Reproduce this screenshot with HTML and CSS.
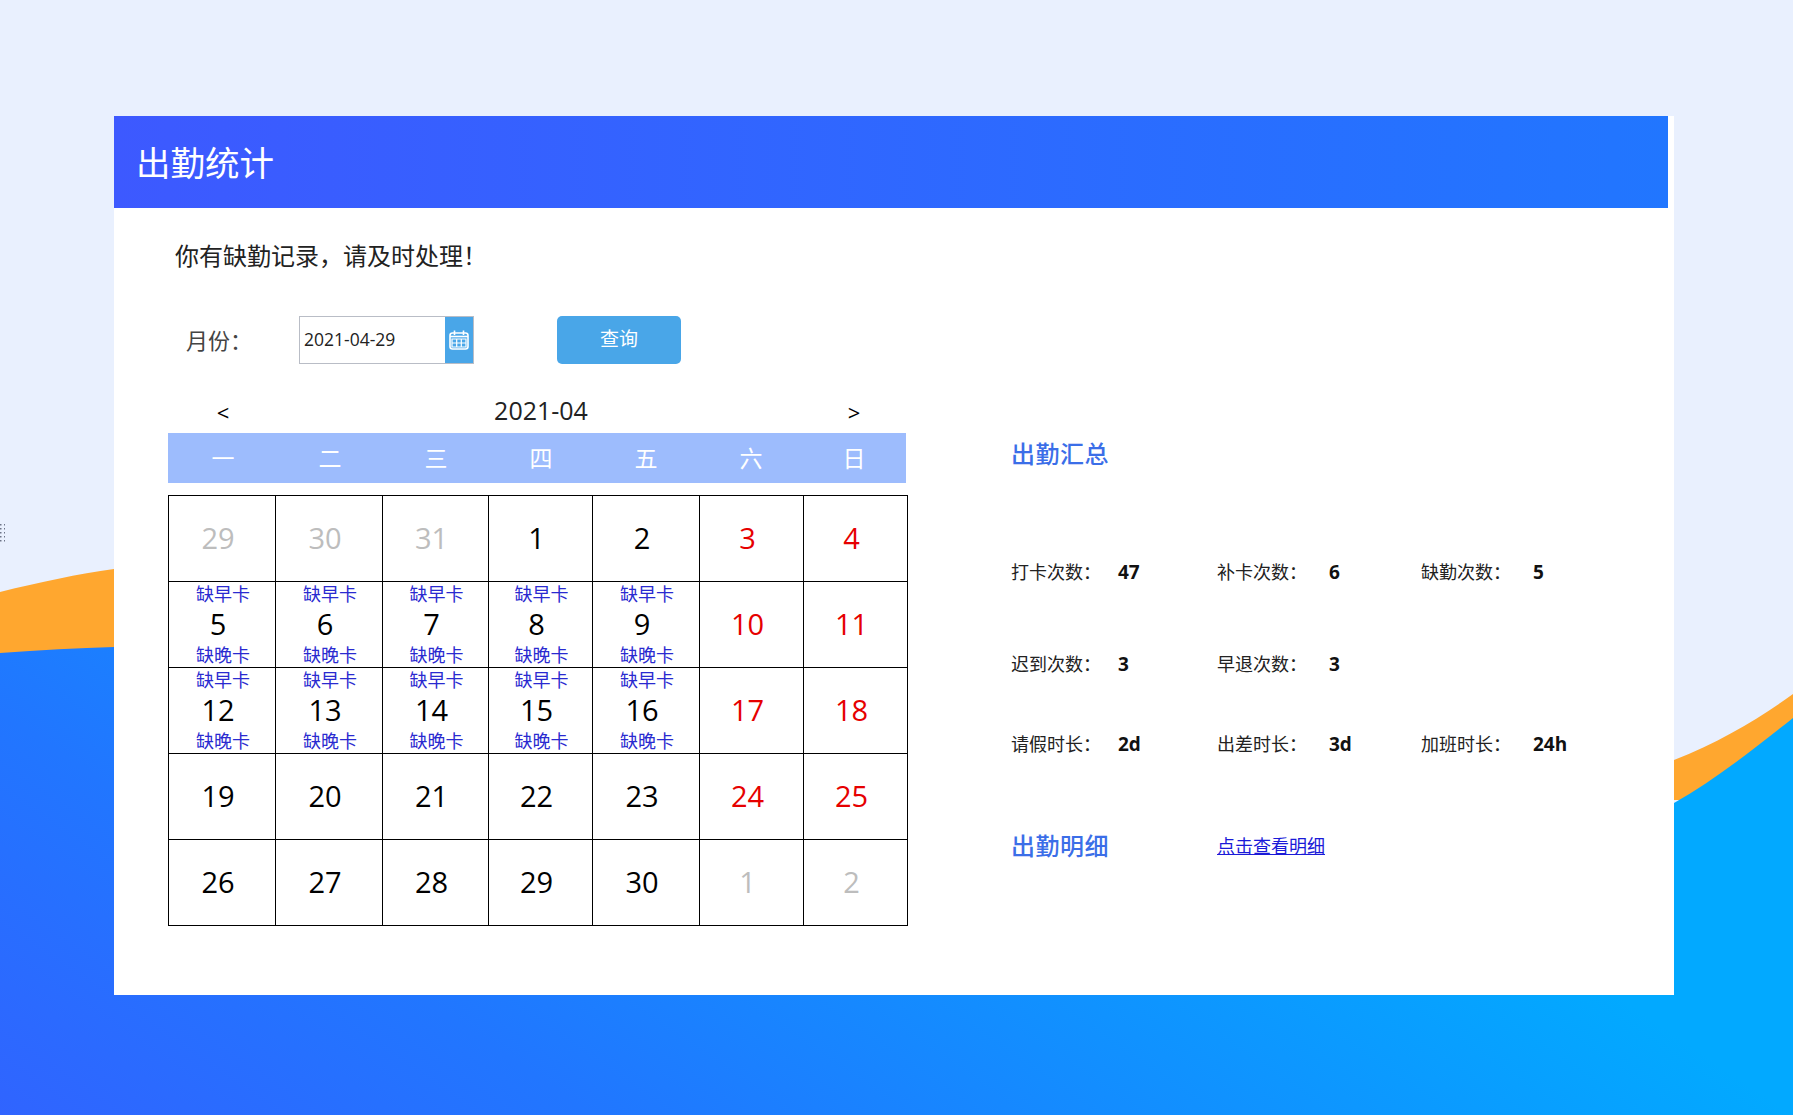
FILE: index.html
```html
<!DOCTYPE html>
<html lang="zh-CN">

<head>
    <meta charset="utf-8">
    <meta name="viewport" content="width=device-width, initial-scale=1.0">
    <title>出勤统计</title>
    <link rel="stylesheet" href="styles.css">
</head>

<body>
    <svg class="bg" width="1793" height="1115" viewBox="0 0 1793 1115">
        <defs>
            <linearGradient id="wave" gradientUnits="userSpaceOnUse" x1="0" y1="1115" x2="567" y2="281">
                <stop offset="0" stop-color="#3064ff" />
                <stop offset="0.33" stop-color="#2176ff" />
                <stop offset="1" stop-color="#02a9ff" />
            </linearGradient>
            <pattern id="dots" width="4" height="4" patternUnits="userSpaceOnUse">
                <rect width="1.5" height="1.5" fill="#6d7488" />
            </pattern>
        </defs>
        <path fill="#ffa72f" d="M0 592 C40 582 78 574 114 569 L900 560 L1674 760 C1720 742 1760 718 1793 694 V800 H0 Z" />
        <path fill="url(#wave)" d="M0 653 C40 650 78 648 114 647 L1000 700 L1674 803 C1715 780 1755 748 1793 718 V1115 H0 Z" />
        <rect x="0" y="523" width="5" height="19" fill="url(#dots)" />
    </svg>

    <div class="card">
        <header class="card-head">
            <h1>出勤统计</h1>
        </header>

        <main class="card-body">
            <p class="notice">你有缺勤记录，请及时处理！</p>

            <div class="filter">
                <label class="filter-label">月份：</label>
                <div class="date-box">
                    <span class="date-value">2021-04-29</span>
                    <span class="date-icon">
                        <svg width="22" height="22" viewBox="0 0 22 22" fill="none" stroke="#fff">
                            <rect x="2" y="4" width="18" height="16" rx="2.5" stroke-width="1.6" />
                            <path d="M6.5 1.5V6M15.5 1.5V6" stroke-width="1.6" />
                            <path d="M2 7.5H20" stroke-width="1.6" />
                            <path d="M4 10H18V18H4ZM8.7 10V18M13.3 10V18M4 14H18" stroke-width="1.2" />
                        </svg>
                    </span>
                </div>
                <button class="search-btn">查询</button>
            </div>

            <div class="columns">
                <section class="calendar">
                    <div class="week-grid month-nav">
                        <span class="arrow">&lt;</span>
                        <span></span>
                        <span></span>
                        <span class="month">2021-04</span>
                        <span></span>
                        <span></span>
                        <span class="arrow">&gt;</span>
                    </div>
                    <div class="week-grid week-bar">
                        <span>一</span><span>二</span><span>三</span><span>四</span><span>五</span><span>六</span><span>日</span>
                    </div>
                    <table class="days">
                        <colgroup>
                            <col class="c-a"><col class="c-a"><col class="c-b"><col class="c-c"><col class="c-a"><col class="c-c"><col class="c-c">
                        </colgroup>
                        <tbody id="days"></tbody>
                    </table>
                </section>

                <section class="summary">
                    <h2 class="sub-title">出勤汇总</h2>

                    <div class="stat-row row-one">
                        <span>打卡次数：</span><b>47</b>
                        <span>补卡次数：</span><b>6</b>
                        <span>缺勤次数：</span><b>5</b>
                    </div>
                    <div class="stat-row row-two">
                        <span>迟到次数：</span><b>3</b>
                        <span>早退次数：</span><b>3</b>
                    </div>
                    <div class="stat-row">
                        <span>请假时长：</span><b>2d</b>
                        <span>出差时长：</span><b>3d</b>
                        <span>加班时长：</span><b>24h</b>
                    </div>

                    <div class="detail">
                        <h2 class="sub-title">出勤明细</h2>
                        <a href="#">点击查看明细</a>
                    </div>
                </section>
            </div>
        </main>
    </div>

    <script src="calendar.js"></script>
</body>

</html>
```

FILE: calendar.js
```js
let dest = document.querySelector("#days");

let dager = [
    [29, "old"], [30, "old"], [31, "old"], [1, ""], [2, ""], [3, "rest"], [4, "rest"],
    [5, "miss"], [6, "miss"], [7, "miss"], [8, "miss"], [9, "miss"], [10, "rest"], [11, "rest"],
    [12, "miss"], [13, "miss"], [14, "miss"], [15, "miss"], [16, "miss"], [17, "rest"], [18, "rest"],
    [19, ""], [20, ""], [21, ""], [22, ""], [23, ""], [24, "rest"], [25, "rest"],
    [26, ""], [27, ""], [28, ""], [29, ""], [30, ""], [1, "old"], [2, "old"]
];

let html = "";
dager.forEach((dag, i) => {
    if (i % 7 == 0) html += "<tr>";
    let top = dag[1] == "miss" ? "缺早卡" : "";
    let bottom = dag[1] == "miss" ? "缺晚卡" : "";
    html += `<td class="${dag[1]}"><div class="cell"><span class="tag">${top}</span><span class="num">${dag[0]}</span><span class="tag">${bottom}</span></div></td>`;
    if (i % 7 == 6) html += "</tr>";
});
dest.innerHTML = html;
```

FILE: styles.css
```css
html {
    margin: 0;
}

body {
    margin: 0;
    width: 1793px;
    height: 1115px;
    overflow: hidden;
    position: relative;
    background-color: #e9f0fe;
    font-family: "Open Sans", "Noto Sans CJK SC", sans-serif;
    color: #000;
}

.bg {
    position: absolute;
    left: 0;
    top: 0;
}

.card {
    position: relative;
    box-sizing: border-box;
    width: 1560px;
    height: 879px;
    margin: 116px 0 0 114px;
    background-color: #fff;
}

.card-head {
    width: 1554px;
    height: 92px;
    display: flex;
    align-items: center;
    background: linear-gradient(90deg, #3d59ff, #2176ff);
}

.card-head h1 {
    margin: 0 0 2px 22px;
    font-size: 34.5px;
    font-weight: 400;
    color: #fff;
}

.card-body {
    padding: 24px 0 0 54px;
}

.notice {
    margin: 0 0 0 7px;
    font-size: 24px;
    line-height: 48px;
    color: #222;
}

.filter {
    display: flex;
    align-items: center;
    height: 48px;
    margin-top: 36px;
}

.filter-label {
    width: 113px;
    margin: 0 0 2px 18px;
    font-size: 22px;
    color: #444;
}

.date-box {
    display: flex;
    box-sizing: border-box;
    width: 175px;
    height: 48px;
    border: 1px solid #b9bdc6;
}

.date-value {
    flex: 1;
    padding-left: 4px;
    font-size: 17.5px;
    line-height: 44px;
    color: #222;
}

.date-icon {
    display: flex;
    align-items: center;
    justify-content: center;
    width: 28px;
    background-color: #49a6e8;
}

.search-btn {
    width: 124px;
    height: 48px;
    margin-left: 83px;
    border: 0;
    border-radius: 5px;
    background-color: #49a6e8;
    color: #fff;
    font-family: inherit;
    font-size: 19px;
    padding: 0 0 4px;
}

.columns {
    display: flex;
    margin-top: 25px;
}

.calendar {
    width: 739px;
}

.week-grid {
    display: grid;
    grid-template-columns: 110px 104px 108px 102px 108px 102px 104px;
    width: 738px;
    text-align: center;
}

.month-nav {
    height: 44px;
    line-height: 43px;
}

.arrow {
    font-size: 22px;
    line-height: 46px;
}

.month {
    font-size: 25px;
    color: #222;
}

.week-bar {
    height: 50px;
    margin-bottom: 12px;
    line-height: 50px;
    background-color: #9dbcfd;
    color: #fff;
    font-size: 23px;
}

.days {
    width: 739px;
    table-layout: fixed;
    border-collapse: collapse;
}

.c-a {
    width: 107px;
}

.c-b {
    width: 106px;
}

.c-c {
    width: 104px;
}

.days td {
    height: 85px;
    padding: 0;
    border: 1px solid #000;
    text-align: center;
}

.cell {
    display: grid;
    grid-template-rows: 24px 37px 24px;
    height: 85px;
}

.tag {
    padding-left: 2px;
    font-size: 18px;
    line-height: 24px;
    color: #2a2ad0;
}

.num {
    padding-right: 8px;
    font-size: 29px;
    line-height: 36px;
}

.old .num {
    color: #bdbdbd;
}

.rest .num {
    color: #e60000;
}

.summary {
    width: 660px;
    padding: 46px 0 0 104px;
}

.sub-title {
    margin: 0;
    font-size: 24px;
    line-height: 36px;
    font-weight: 500;
    letter-spacing: 0.5px;
    color: #3b6ee8;
    font-family: "Noto Sans CJK SC", serif;
}

.stat-row {
    display: grid;
    grid-template-columns: 107px 99px 112px 92px 112px auto;
    height: 30px;
    margin-top: 50px;
    font-size: 18px;
    line-height: 30px;
    color: #222;
}

.stat-row b {
    font-size: 19px;
    font-weight: 700;
    color: #111;
}

.row-one {
    margin-top: 86px;
}

.row-two {
    margin-top: 62px;
}

.detail {
    display: flex;
    align-items: center;
    margin-top: 68px;
}

.detail .sub-title {
    width: 206px;
}

.detail a {
    font-size: 18px;
    color: #1a1ad8;
}
```
